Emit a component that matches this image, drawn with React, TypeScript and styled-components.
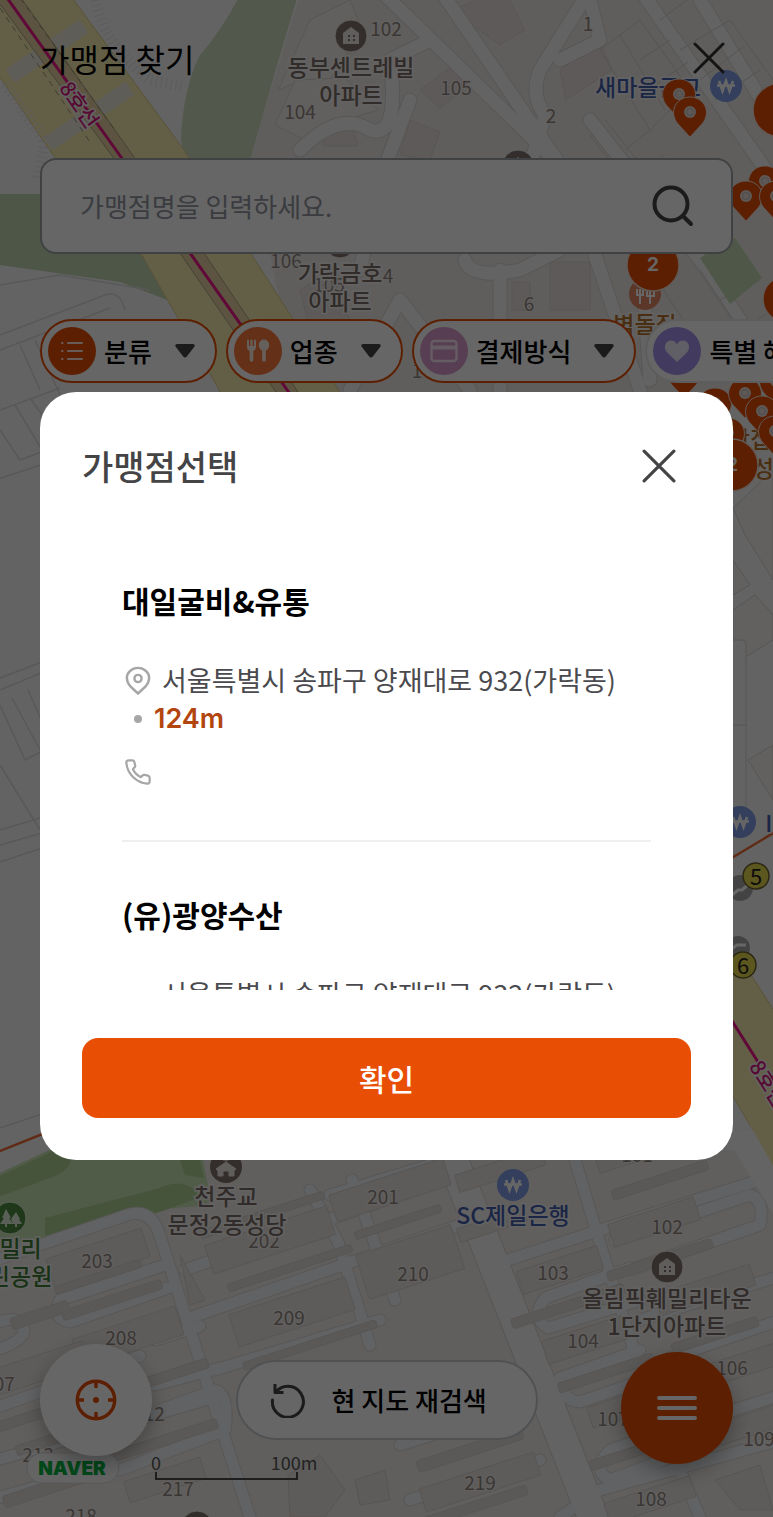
import React from "react";
import styled, { createGlobalStyle } from "styled-components";

const ORANGE = "#e84e04";
const MAP_FONT = '"Noto Sans CJK KR", sans-serif';

const GlobalStyle = createGlobalStyle`
  *, *::before, *::after { box-sizing: border-box; }
  body {
    margin: 0;
    background: #f8f8f8;
    color: #000;
    font-family: "Noto Sans CJK KR", sans-serif;
  }
  button, input { font: inherit; }
  button { border: 0; padding: 0; background: none; color: inherit; cursor: pointer; }
  h1, h2, h3, p, ul { margin: 0; padding: 0; }
  li { list-style: none; }
`;

const Page = styled.div`
  position: relative;
  display: flex;
  flex-direction: column;
  min-height: 100vh;
  overflow: hidden;
`;

const MapCanvas = styled.svg`
  position: absolute;
  inset: 0;
  width: 100%;
  height: 100%;
`;

const Screen = styled.div`
  position: relative;
  display: flex;
  flex: 1;
  flex-direction: column;
  padding: 34px 0 53px;
`;

const TopBar = styled.header`
  display: flex;
  align-items: center;
  justify-content: space-between;
  height: 48px;
  padding: 0 40px;
`;

const PageTitle = styled.h1`
  font-size: 32px;
  font-weight: 400;
  line-height: 48px;
`;

const IconButton = styled.button`
  display: grid;
  place-items: center;
  width: 48px;
  height: 48px;
`;

const SearchBox = styled.form`
  display: flex;
  align-items: center;
  height: 96px;
  margin: 76px 40px 0;
  padding: 0 34px 0 38px;
  border: 2px solid #9ea4a9;
  border-radius: 16px;
  background: #fff;
`;

const SearchInput = styled.input`
  flex: 1;
  min-width: 0;
  padding: 0;
  border: 0;
  outline: 0;
  background: transparent;
  font-size: 26px;
  line-height: 40px;
  &::placeholder { color: #9296a0; opacity: 1; }
`;

const ChipRow = styled.nav`
  display: flex;
  gap: 9px;
  margin-top: 65px;
  padding-left: 40px;
  overflow: hidden;
`;

const Chip = styled.button<{ $active?: boolean }>`
  display: flex;
  flex: none;
  align-items: center;
  height: 64px;
  padding: 0 20px 0 6px;
  border: 2px solid ${(p) => (p.$active ? ORANGE : "#e8e8ea")};
  border-radius: 32px;
  background: #fff;
  font-size: 26px;
  font-weight: 500;
  line-height: 40px;
`;

const ChipIcon = styled.span<{ $tone: string }>`
  display: grid;
  place-items: center;
  width: 48px;
  height: 48px;
  margin-right: 8px;
  border-radius: 50%;
  background: ${(p) => p.$tone};
`;

const Caret = styled.svg`
  margin-left: 23px;
`;

const BottomBar = styled.footer`
  display: flex;
  justify-content: space-between;
  height: 120px;
  margin-top: auto;
  padding: 0 40px;
`;

const RoundButton = styled.button<{ $filled?: boolean }>`
  display: grid;
  place-items: center;
  align-self: ${(p) => (p.$filled ? "flex-end" : "flex-start")};
  width: 112px;
  height: 112px;
  border-radius: 50%;
  background: ${(p) => (p.$filled ? ORANGE : "#fff")};
  box-shadow: 0 8px 20px rgba(0, 0, 0, 0.3);
`;

const ResearchButton = styled.button`
  display: flex;
  align-items: center;
  gap: 26px;
  width: 302px;
  height: 80px;
  margin-top: 16px;
  padding-left: 32px;
  border: 2px solid #c9cbce;
  border-radius: 40px;
  background: #fff;
  font-size: 26px;
  font-weight: 500;
  line-height: 40px;
`;

const Backdrop = styled.div`
  position: absolute;
  inset: 0;
  display: flex;
  align-items: center;
  padding: 35px 40px 0;
  background: rgba(0, 0, 0, 0.6);
`;

const Dialog = styled.section`
  width: 100%;
  padding: 50px 42px 42px;
  border-radius: 36px;
  background: #fff;
`;

const DialogHeader = styled.header`
  display: flex;
  align-items: center;
  justify-content: space-between;
  padding-right: 8px;
`;

const DialogTitle = styled.h2`
  color: #444446;
  font-size: 34px;
  font-weight: 500;
  line-height: 48px;
`;

const StoreList = styled.ul`
  max-height: 462px;
  margin-top: 38px;
  padding: 0 40px;
  overflow-y: auto;
  scrollbar-width: none;
`;

const StoreItem = styled.li`
  padding: 54px 0;
  & + & { border-top: 2px solid #efefef; }
`;

const StoreName = styled.h3`
  margin-bottom: 42px;
  font-size: 30px;
  font-weight: 700;
  line-height: 36px;
`;

const StoreLine = styled.p<{ $gap?: number }>`
  display: flex;
  align-items: center;
  gap: ${(p) => p.$gap ?? 0}px;
  color: #4a4a4e;
  font-size: 27px;
  line-height: 39px;
  white-space: nowrap;
`;

const LineIcon = styled.span`
  display: grid;
  flex: none;
  place-items: center;
  width: 32px;
  height: 28px;
`;

const Dot = styled.span`
  width: 8px;
  height: 8px;
  border-radius: 50%;
  background: #a6a6a8;
`;

const Distance = styled.strong`
  color: #b3450f;
  font-family: Inter, sans-serif;
  font-weight: 600;
`;

const PhoneLine = styled.div`
  margin-top: 20px;
`;

const ConfirmButton = styled.button`
  width: 100%;
  height: 80px;
  margin-top: 48px;
  border-radius: 16px;
  background: ${ORANGE};
  color: #fff;
  font-size: 30px;
  font-weight: 500;
`;

/* ---------- icons ---------- */

const Cross = ({ size, color, width }: { size: number; color: string; width: number }) => (
  <svg width={size} height={size} viewBox="0 0 32 32" fill="none" stroke={color} strokeWidth={width} strokeLinecap="round">
    <path d="M2 2 30 30M30 2 2 30" />
  </svg>
);

const Magnifier = () => (
  <svg width="44" height="44" viewBox="0 0 44 44" fill="none" stroke="#444446" strokeWidth="4" strokeLinecap="round">
    <circle cx="20" cy="20" r="16.5" />
    <path d="M32 32 40 40" />
  </svg>
);

const ListIcon = () => (
  <svg width="24" height="24" viewBox="0 0 24 24" fill="none" stroke="#ffe9dd" strokeWidth="2" strokeLinecap="round">
    <path d="M8 4H22M8 12H22M8 20H22M2 4h.5M2 12h.5M2 20h.5" />
  </svg>
);

const CutleryIcon = () => (
  <svg width="26" height="26" viewBox="0 0 26 26" fill="#fff1e8">
    <path d="M2 2.5a1 1 0 0 1 2 0V8h1.400V2.500a1.100 1.100 0 0 1 2.200 0V8H9V2.500a1 1 0 0 1 2 0V9c0 2-1 3.200-2.700 3.700V22a1.800 1.800 0 0 1-3.600 0v-9.300C3 12.200 2 11 2 9Z" />
    <path d="M19 1.500c3 0 5.200 2.500 5.200 5.600 0 2.600-1.400 4.800-3.400 5.500V22a1.800 1.800 0 0 1-3.600 0v-9.400c-2-.7-3.400-2.900-3.400-5.500 0-3.100 2.200-5.600 5.200-5.600Z" />
  </svg>
);

const CardIcon = () => (
  <svg width="28" height="24" viewBox="0 0 28 24" fill="none" stroke="#fbe6f6" strokeWidth="2.400">
    <rect x="1.500" y="2" width="25" height="20" rx="3" />
    <path d="M1.500 8.500h25" strokeWidth="4" />
  </svg>
);

const HeartIcon = () => (
  <svg width="26" height="24" viewBox="0 0 26 24" fill="#f3edff">
    <path d="M13 23 3 13.200C.5 10.700.3 6.200 2.500 3.700c2.600-3 7.300-2.700 9.500.3l1 1.400 1-1.400c2.200-3 6.900-3.300 9.500-.3 2.200 2.500 2 7-.5 9.500Z" />
  </svg>
);

const CaretIcon = () => (
  <Caret width="20" height="14" viewBox="0 0 20 14" fill="#444446">
    <path d="M2 0h16c1.500 0 2.200 1.600 1.300 2.800l-7.700 10a2 2 0 0 1-3.200 0L.7 2.800C-.2 1.600.5 0 2 0Z" />
  </Caret>
);

const TargetIcon = () => (
  <svg width="42" height="42" viewBox="0 0 42 42" fill="none" stroke={ORANGE} strokeWidth="3.400">
    <circle cx="21" cy="21" r="18.700" />
    <path d="M21 2v7M21 33v7M2 21h7M33 21h7" />
    <circle cx="21" cy="21" r="3" fill={ORANGE} stroke="none" />
  </svg>
);

const ReloadIcon = () => (
  <svg width="36" height="36" viewBox="0 0 36 36" fill="none" stroke="#444446" strokeWidth="3" strokeLinejoin="round">
    <path d="M5 2v8.500H13.500" />
    <path d="M5.500 10.500A15.500 15.500 0 1 1 2.500 18" strokeLinecap="round" />
  </svg>
);

const MenuIcon = () => (
  <svg width="42" height="28" viewBox="0 0 42 28" stroke="#fff" strokeWidth="4" strokeLinecap="round">
    <path d="M3 4H39M3 14H39M3 24H39" />
  </svg>
);

const PinIcon = () => (
  <svg width="26" height="30" viewBox="0 0 26 30" fill="none" stroke="#a6a6a8" strokeWidth="2.400" strokeLinejoin="round">
    <path d="M13 27.500 5.500 20.500C.5 15 1 8.500 5 5c4.500-4.200 11.500-4.200 16 0 4 3.500 4.500 10-.5 15.500Z" />
    <circle cx="13" cy="12.500" r="3.600" />
  </svg>
);

const PhoneIcon = () => (
  <svg width="28" height="28" viewBox="0 0 24 24" fill="none" stroke="#a6a6a8" strokeWidth="1.900" strokeLinejoin="round">
    <path d="M22 17v3a2 2 0 0 1-2.200 2A19.800 19.800 0 0 1 2 4.200 2 2 0 0 1 4 2h3.200c.8 0 1.500.6 1.700 1.400l.7 3c.1.600-.1 1.200-.5 1.600L7.600 9.600a15 15 0 0 0 6.800 6.800l1.600-1.500c.4-.4 1-.6 1.600-.5l3 .7c.8.200 1.400.9 1.400 1.900Z" />
  </svg>
);

/* ---------- map ---------- */

type Strip = [number, number, number, number];

const STRIPS: Strip[] = [
  [98, 1258, 100, 30], [112, 1300, 104, 10], [98, 1277, 90, 8], [128, 1337, 108, 30], [40, 1315, 60, 12],
  [270, 1240, 128, 30], [262, 1215, 130, 8], [290, 1268, 130, 8], [292, 1312, 122, 34], [310, 1345, 140, 8],
  [40, 1368, 96, 26], [170, 1375, 80, 10], [165, 1440, 110, 10], [60, 1437, 92, 10], [60, 1484, 118, 12], [165, 1480, 80, 22],
  [390, 1190, 120, 28], [398, 1222, 90, 8], [410, 1262, 100, 46], [20, 1420, 90, 10],
  [500, 1170, 90, 18], [492, 1225, 70, 14], [560, 1270, 84, 24], [568, 1306, 118, 10], [585, 1340, 84, 24],
  [606, 1373, 100, 10], [630, 1405, 84, 22], [646, 1448, 118, 10], [660, 1180, 100, 10], [654, 1222, 90, 24],
  [660, 1260, 110, 10], [705, 1290, 100, 22], [715, 1335, 90, 10], [742, 1365, 80, 22], [748, 1425, 80, 22],
  [470, 1450, 110, 12], [480, 1482, 120, 24], [470, 1508, 120, 10], [650, 1500, 90, 22], [640, 1150, 90, 20],
];

const ROADS = [
  "M-10 1262 130 1214Q150 1210 158 1230L250 1517",
  "M60 1300Q50 1318 70 1322L168 1288", "M60 1300 165 1265",
  "M-10 1325Q22 1312 24 1330Q24 1342-10 1352",
  "M195 1316 380 1252 460 1225", "M185 1270 420 1188", "M310 1190 338 1242 370 1345",
  "M155 1340 200 1326M155 1385 220 1368M160 1410 215 1390Q230 1395 225 1430L120 1470",
  "M-10 1410 140 1356M-10 1462 205 1400M-10 1500 60 1480",
  "M215 1370 380 1320", "M395 1300 352 1180M430 1165 330 1195",
  "M508 1260 600 1230 760 1180", "M572 1150 605 1260 650 1400 700 1517",
  "M545 1298Q530 1318 548 1328L640 1300M545 1298 630 1268",
  "M560 1378Q560 1400 580 1402L650 1378M560 1378 640 1350",
  "M610 1450Q590 1470 610 1480L690 1450M610 1450 780 1395",
  "M615 1240 750 1195Q765 1200 760 1225L630 1270M640 1320 780 1276M650 1365 780 1320",
  "M400 1445 545 1400M410 1500 540 1460M560 1517 600 1490 780 1440",
];

const TOP_ROADS = [
  "M380-10 560 165 590 240 640 390", "M440-10 560 165", "M640-10 780 190",
  "M590-10 540 70Q530 95 545 115L530 165", "M410 100 380 180 360 270M350 390 400 300 470 390",
  "M300 150Q340 110 370 130 400 140 390 60L430 40", "M590 120 700 260 780 380", "M560 60 600 40 590 0",
  "M465 260Q470 280 520 270L560 250M500 270V390", "M640 240 650 380", "M700 0 780 130",
];

const BUILDING_NUMBERS: [string, number, number][] = [
  ["102", 386, 36], ["104", 300, 119], ["105", 456, 95], ["1", 588, 31], ["2", 551, 123], ["106", 286, 268],
  ["105", 329, 292], ["4", 388, 283], ["6", 529, 311], ["1", 417, 378],
  ["203", 97, 1268], ["202", 264, 1248], ["201", 383, 1204], ["208", 121, 1345], ["209", 289, 1325],
  ["210", 413, 1281], ["207", -1, 1391], ["212", 149, 1421], ["213", 38, 1462], ["217", 178, 1496],
  ["218", 81, 1523], ["219", 480, 1490], ["101", 637, 1162], ["102", 667, 1234], ["103", 553, 1280],
  ["104", 583, 1348], ["106", 732, 1375], ["107", 613, 1426], ["109", 759, 1446], ["108", 651, 1506],
];

const PLACES: [string, number, number, string][] = [
  ["동부센트레빌", 351, 76, "#7a6d66"], ["아파트", 351, 104, "#7a6d66"],
  ["가락금호", 340, 282, "#7a6d66"], ["아파트", 340, 310, "#7a6d66"],
  ["새마을금고", 648, 96, "#4460b0"], ["벽돌집", 645, 333, "#b8742c"],
  ["천주교", 226, 1205, "#7a6d66"], ["문정2동성당", 227, 1233, "#7a6d66"],
  ["SC제일은행", 513, 1224, "#4460b0"], ["올림픽훼밀리타운", 667, 1307, "#7a6d66"],
  ["1단지아파트", 667, 1335, "#7a6d66"], ["훼밀리", 10, 1257, "#3f7d35"], ["근린공원", 10, 1285, "#3f7d35"],
  ["맛집", 750, 448, "#b8742c"], ["성어", 774, 477, "#b8742c"], ["IBK", 784, 832, "#4460b0"],
];

const PINS: [number, number][] = [
  [679, 97], [690, 115], [765, 184], [746, 199], [776, 199], [684, 376], [715, 406], [776, 384], [745, 396],
  [762, 414], [728, 436], [775, 434],
];

const CLUSTERS: [number, number, number, string][] = [
  [780, 110, 27, "4"], [653, 265, 26, "2"], [786, 299, 23, ""], [732, 465, 26, "2"],
];

const House = ({ x, y }: { x: number; y: number }) => (
  <g transform={`translate(${x} ${y})`}>
    <circle r="16" fill="#7f736d" stroke="#f2efec" />
    <path d="M0-9 8-3V8H-8V-3Z" fill="#efeae6" />
    <path d="M-3-1h2v2h-2ZM2-1h2v2h-2ZM-3 3h2v2h-2ZM2 3h2v2h-2Z" fill="#7f736d" />
  </g>
);

const Bank = ({ x, y }: { x: number; y: number }) => (
  <g transform={`translate(${x} ${y})`}>
    <circle r="16" fill="#7f9de6" />
    <path d="M-7-5-3.500 5 0-5 3.500 5 7-5M-9-.5H9" fill="none" stroke="#fff" strokeWidth="2.600" />
  </g>
);

const CityMap = () => (
  <MapCanvas viewBox="0 0 773 1517" preserveAspectRatio="xMidYMid slice" aria-hidden="true" fontFamily={MAP_FONT}>
    <rect width="773" height="1517" fill="#f8f8f8" />

    {/* upper apartment blocks */}
    <path d="M300-5H780V400H300L250 157Z" fill="#f0ece9" />
    <g fill="#e8e2de" stroke="#ddd6d1">
      <path d="M278 90 310 20 350 0 362 30 330 80 290 85Z" fill="#f3efec" />
      <path d="M275 125 295 80 345 78 378 110 345 120 305 140Z" fill="#f3efec" />
      <path d="M322 130 352 126 358 146 324 146ZM420 90 460 60 475 80 440 108ZM450 10 505-10 525 30 500 45ZM560 70 600 40 612 70 566 100ZM410 120 440 132 430 160 400 155ZM550 262H590V310H550ZM512 282H530V310H512ZM300 290 330 270 350 320 310 330Z" />
    </g>
    <g fill="none" strokeLinecap="round" strokeLinejoin="round">
      {TOP_ROADS.map((d) => <path key={d} d={d} stroke="#dcd7d3" strokeWidth="15" />)}
      {TOP_ROADS.map((d) => <path key={d} d={d} stroke="#f7f8fa" strokeWidth="13" />)}
    </g>
    <g fill="none" stroke="#d5d1ce" strokeWidth="1">
      <path d="M600 50 640 20 690 90 650 130ZM620 35 665 110M640 60 670 40M655 85 688 62M590 135 640 200M605 120 690 225M625 150 650 130M640 175 665 155M660 20 700-10M680 50 730 20 773 80M700 80 745 45M715 100 760 70M640 255 690 330M700 270 740 330M720 300 760 280M740 330 773 310" />
    </g>
    <path d="M700 258 735 238 762 278 730 304Z" fill="#c6dbb4" />

    {/* parks and boulevard */}
    <path d="M240-5Q222 30 200 55 183 88 181 140L184 160H250L278 62 298-5Z" fill="#cdddbd" />
    <path d="M0 194H60L150 256 178 304 120 282 0 265Z" fill="#c4d6b4" />
    <path d="M-5-5H70L184 150 250 252 345 400H225L140 252 60 165-5 70Z" fill="#f8eeb0" stroke="#dccb8a" />
    <path d="M84 26 10 76M130 88 48 144" stroke="#eae8da" strokeWidth="16" />
    <path d="M-12-12 113 157 180 253 278 395H300L204 253 134 157 14-12Z" fill="#e5d3a0" stroke="#a9a283" />
    <path d="M20-2 115 130M0 8 92 145" stroke="#9b967c" strokeDasharray="6 5" />
    <path d="M5-5 121 157 190 253 290 394" stroke="#f0148a" strokeWidth="3" fill="none" />
    <g stroke="#e4e4e4" strokeWidth="11" strokeDasharray="1 4" fill="none">
      <path d="M95-5Q100 40 150 80L182 86" /><path d="M5 85 45 140 38 180" />
    </g>

    {/* left blocks */}
    <g fill="none" stroke="#dcdcdc" strokeWidth="1.500">
      <path d="M0 335 105 295Q120 290 125 310M0 350 110 308M0 285 60 275 150 290M20 345 40 390M35 340 60 395M0 410 60 388M0 430 20 460 60 445M15 405 45 455M30 398 60 440M-5 480 50 462M0 678 60 655M0 690 60 665M0 705 25 760 60 742M12 698 40 750M28 690 48 735M0 765 40 830M40 765 60 790M0 830 60 812M0 845 60 828M0 862 60 842M0 1128 60 1108" />
    </g>

    {/* right blocks */}
    <g fill="#f4f2f0" stroke="#d8d4d0">
      <path d="M733 508 773 470V580L745 535ZM733 560 750 585 733 595ZM733 610 755 595 773 615V640L733 665ZM748 760 773 745V800Z" />
    </g>
    <path d="M720 640h22q4 0 4 4v164q0 4-4 4H720ZM720 725H746" fill="#f8f8f8" stroke="#d2d2d2" />
    <path d="M720 865 780 829M-5 1153 60 1127" stroke="#f06a35" strokeWidth="2.500" />
    <path d="M720 925 753 978 780 1020V1175L720 1075Z" fill="#f8eeb0" stroke="#dccb8a" />
    <path d="M720 1002 758 1062" stroke="#f0148a" strokeWidth="3" />

    {/* lower apartment blocks */}
    <path d="M-5 1190 60 1150H780V1525H-5Z" fill="#f1edea" />
    <path d="M-5 1175 60 1145H200L212 1205 150 1210 45 1240-5 1245Z" fill="#c9e3b4" />
    <path d="M-5 1178 60 1148H72Q75 1170 50 1178L-5 1198ZM45 1218 160 1188Q180 1178 195 1190L198 1198 160 1212 45 1240ZM180 1160H200L204 1178 185 1175Z" fill="#acd294" />
    <g fill="none" strokeLinecap="round" strokeLinejoin="round">
      {ROADS.map((d) => <path key={d} d={d} stroke="#dcd8d5" strokeWidth="13" />)}
      <path d="M445 1140 600 1535" stroke="#d9d5d1" strokeWidth="32" />
      {ROADS.map((d) => <path key={d} d={d} stroke="#f3f5f8" strokeWidth="11" />)}
      <path d="M445 1140 600 1535" stroke="#f7f8f9" strokeWidth="30" />
    </g>
    <g fill="#e7e2dd" stroke="#dad4cf">
      {STRIPS.map(([cx, cy, w, h]) => (
        <rect key={`${cx}-${cy}`} x={-w / 2} y={-h / 2} width={w} height={h} rx={h < 14 ? 3 : 1} fill={h < 14 ? "#e4dfda" : "#ece7e3"} transform={`translate(${cx} ${cy}) rotate(-18)`} />
      ))}
      <path d="M288 1475 320 1455 345 1490 325 1517H290ZM355 1480 385 1470 390 1500 360 1505ZM715 1480 760 1465 773 1510H740ZM180 1255 205 1300 190 1305Z" fill="#ebe6e2" />
    </g>
    <path d="M722 1130H780V1225Z" fill="#f9f9f9" />
    <path d="M750 1125H780V1178Z" fill="#f8eeb0" />

    {/* labels */}
    <g fontSize="19" fill="#938781" stroke="#f4f1ee" strokeWidth="2" paintOrder="stroke" textAnchor="middle">
      {BUILDING_NUMBERS.map(([t, x, y]) => <text key={`${t}-${x}`} x={x} y={y}>{t}</text>)}
    </g>
    <g fontSize="23" fontWeight="500" stroke="#f8f6f4" strokeWidth="3" paintOrder="stroke" textAnchor="middle">
      {PLACES.map(([t, x, y, c]) => <text key={`${t}-${y}`} x={x} y={y} fill={c}>{t}</text>)}
      <text transform="translate(73 109) rotate(55)" fontSize="21" fill="#d6177c">8호선</text>
      <text transform="translate(762 1088) rotate(58)" fontSize="21" fill="#d6177c">8호선</text>
    </g>

    {/* places */}
    <House x={351} y={36} />
    <House x={518} y={166} />
    <House x={340} y={242} />
    <House x={667} y={1267} />
    <House x={197} y={1527} />
    <g transform="translate(226 1167)">
      <circle r="16" fill="#7f736d" />
      <path d="M0-9V-4M-3-7H3M0-5 10 2 8 4V9H3V4H-3V9H-8V4L-10 2Z" fill="#efeae6" stroke="#efeae6" />
    </g>
    <g transform="translate(10 1218)">
      <circle r="16" fill="#4c8d3f" stroke="#e6f2de" />
      <path d="M-4-9 1 0H-1L3 6H-3V9H-5V6H-10L-6 0H-8ZM6-6 10 1H9L12 6H7V9H5V6H3L1 1Z" fill="#e2f1da" />
    </g>
    <Bank x={726} y={86} />
    <Bank x={513} y={1185} />
    <Bank x={740} y={822} />
    <g transform="translate(645 294)">
      <circle r="16" fill="#e58a66" />
      <path d="M-8-5V1H-2V-5M-5-5V10M5-5V10M2-5H9V2H2Z" stroke="#fff" strokeWidth="2" fill="none" />
    </g>
    <g fill="#a9a9a9">
      <circle cx="740" cy="888" r="13" /><circle cx="738" cy="948" r="12" />
      <path d="M731 896 738 890H742L749 884M730 950 737 945H746" stroke="#fff" strokeWidth="3" fill="none" />
    </g>
    <g stroke="#6f6530" strokeWidth="1.500" fontSize="22" fontWeight="400" textAnchor="middle">
      <circle cx="756" cy="876" r="13" fill="#e6d64e" />
      <circle cx="743" cy="965" r="13" fill="#e6d64e" />
      <g fill="#222" stroke="none"><text x="756" y="885">5</text><text x="743" y="974">6</text></g>
    </g>

    {/* store markers */}
    {PINS.map(([x, y]) => (
      <g key={`${x}-${y}`} transform={`translate(${x} ${y})`}>
        <path d="M0 22-12 9C-22-3-14-18 0-18S22-3 12 9Z" fill={ORANGE} stroke="#f3e4dc" />
        <circle cy="-3" r="6" fill="#e9ded9" />
        <circle cy="-3" r="3.500" fill="none" stroke="#c9bdb7" />
      </g>
    ))}
    {CLUSTERS.map(([x, y, r, n]) => (
      <g key={`${x}-${y}`}>
        <circle cx={x} cy={y} r={r} fill={ORANGE} stroke="#f3ded2" strokeWidth="1.500" />
        <text x={x} y={y + 6} fill="#fff" fontFamily="Inter, sans-serif" fontSize="19" fontWeight="700" textAnchor="middle">{n}</text>
      </g>
    ))}

    {/* attribution and scale */}
    <rect x="27" y="1453" width="92" height="30" rx="15" fill="#f9f9f9" stroke="#dcdcdc" />
    <text x="72" y="1475" fill="#00b341" fontFamily="Inter, sans-serif" fontSize="19" fontWeight="900" textAnchor="middle">NAVER</text>
    <g fill="#555" fontSize="18" textAnchor="middle">
      <text x="156" y="1470">0</text>
      <text x="294" y="1470">100m</text>
    </g>
    <path d="M156 1472V1479H297V1472" fill="none" stroke="#4c4c4c" strokeWidth="2" />
  </MapCanvas>
);

/* ---------- screen ---------- */

const filters = [
  { label: "분류", tone: ORANGE, icon: <ListIcon />, active: true },
  { label: "업종", tone: "#f9793a", icon: <CutleryIcon />, active: true },
  { label: "결제방식", tone: "#dc9ccf", icon: <CardIcon />, active: true },
  { label: "특별 혜택", tone: "#a994ee", icon: <HeartIcon />, active: false },
];

const stores = [
  { name: "대일굴비&유통", address: "서울특별시 송파구 양재대로 932(가락동)", distance: "124m", pin: true },
  { name: "(유)광양수산", address: "서울특별시 송파구 양재대로 932(가락동)", distance: "124m", pin: false },
];

export default function App() {
  return (
    <>
      <GlobalStyle />
      <Page>
        <CityMap />
        <Screen>
          <TopBar>
            <PageTitle>가맹점 찾기</PageTitle>
            <IconButton type="button" aria-label="닫기">
              <Cross size={32} color="#333" width={3} />
            </IconButton>
          </TopBar>
          <SearchBox onSubmit={(e) => e.preventDefault()}>
            <SearchInput type="text" aria-label="가맹점명" placeholder="가맹점명을 입력하세요." />
            <IconButton type="submit" aria-label="검색">
              <Magnifier />
            </IconButton>
          </SearchBox>
          <ChipRow>
            {filters.map((f) => (
              <Chip key={f.label} type="button" $active={f.active}>
                <ChipIcon $tone={f.tone}>{f.icon}</ChipIcon>
                {f.label}
                <CaretIcon />
              </Chip>
            ))}
          </ChipRow>
          <BottomBar>
            <RoundButton type="button" aria-label="현재 위치">
              <TargetIcon />
            </RoundButton>
            <ResearchButton type="button">
              <ReloadIcon />
              현 지도 재검색
            </ResearchButton>
            <RoundButton type="button" aria-label="메뉴" $filled>
              <MenuIcon />
            </RoundButton>
          </BottomBar>
        </Screen>
        <Backdrop>
          <Dialog role="dialog" aria-modal="true" aria-labelledby="store-dialog-title">
            <DialogHeader>
              <DialogTitle id="store-dialog-title">가맹점선택</DialogTitle>
              <IconButton type="button" aria-label="닫기">
                <Cross size={34} color="#444446" width={3} />
              </IconButton>
            </DialogHeader>
            <StoreList>
              {stores.map((s) => (
                <StoreItem key={s.name}>
                  <StoreName>{s.name}</StoreName>
                  <StoreLine $gap={8}>
                    <LineIcon>{s.pin && <PinIcon />}</LineIcon>
                    {s.address}
                  </StoreLine>
                  <StoreLine>
                    <LineIcon><Dot /></LineIcon>
                    <Distance>{s.distance}</Distance>
                  </StoreLine>
                  <PhoneLine>
                    <LineIcon><PhoneIcon /></LineIcon>
                  </PhoneLine>
                </StoreItem>
              ))}
            </StoreList>
            <ConfirmButton type="button">확인</ConfirmButton>
          </Dialog>
        </Backdrop>
      </Page>
    </>
  );
}
